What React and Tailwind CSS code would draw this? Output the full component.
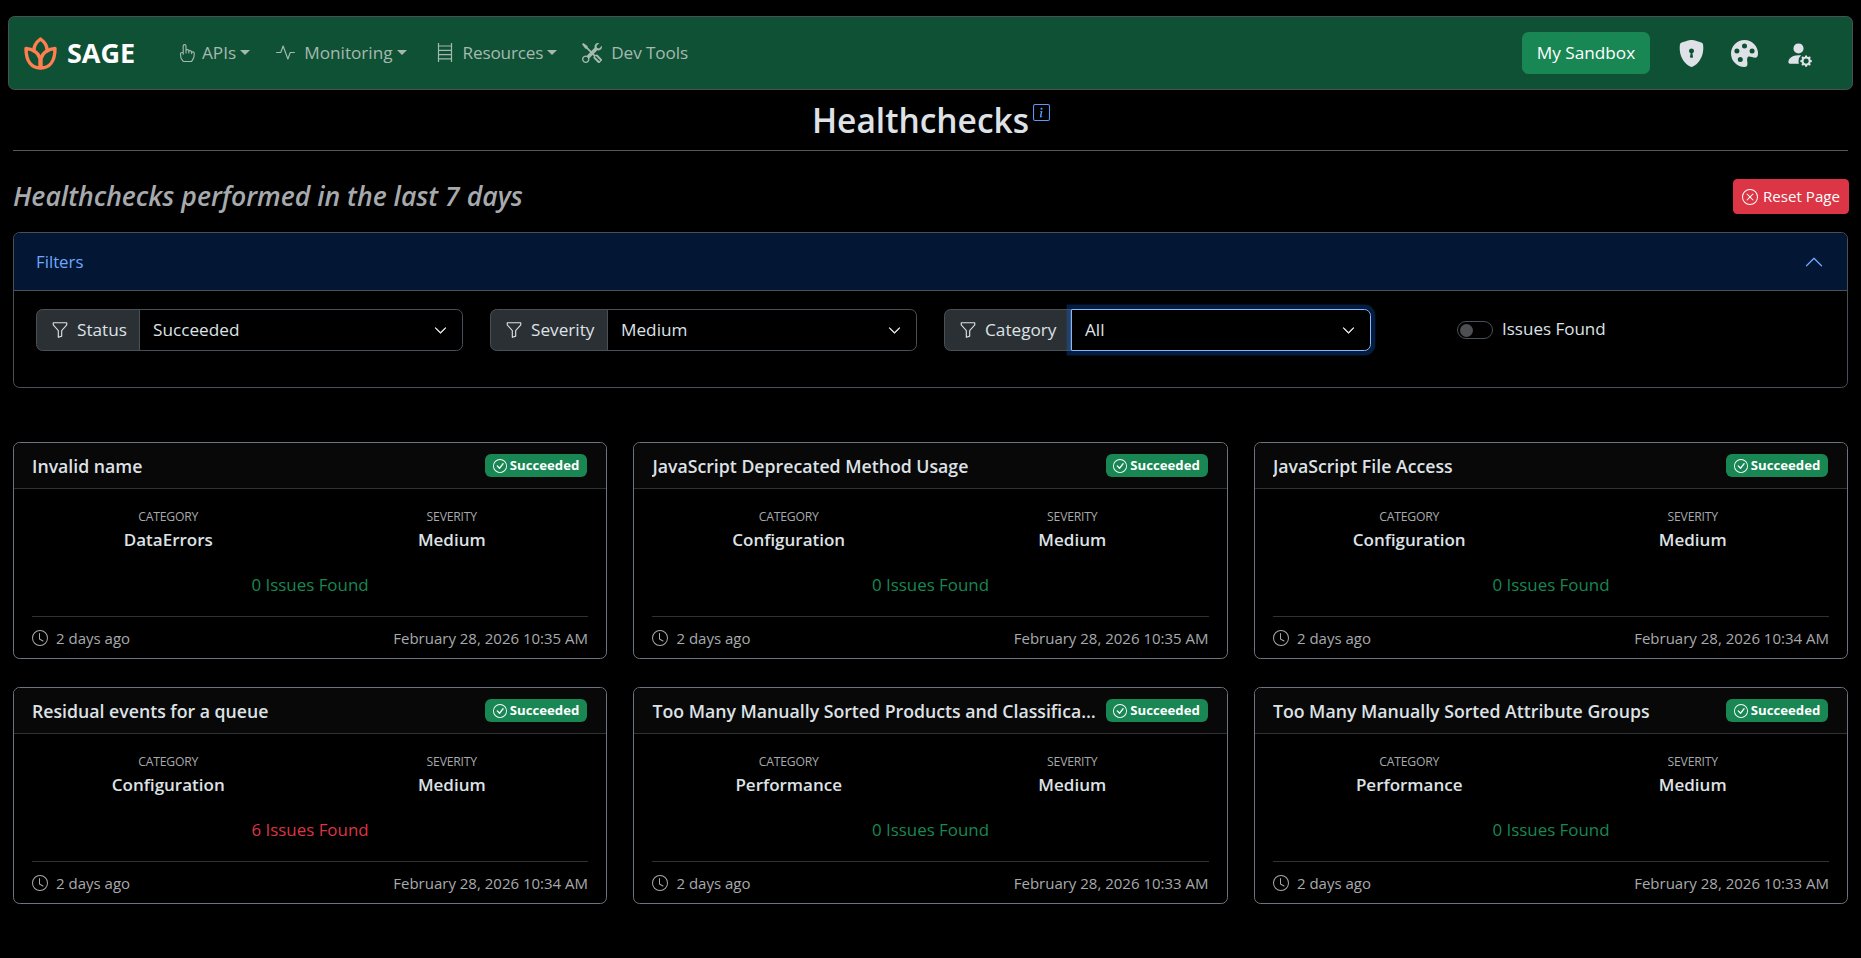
import React from "react";
import {
  BsHandIndex, BsActivity, BsTools, BsShieldLockFill, BsPaletteFill, BsPersonFillGear,
  BsFunnel, BsClock, BsCheckCircle, BsXCircle, BsInfoSquare, BsChevronDown, BsChevronUp,
} from "react-icons/bs";

const font = "font-['Open_Sans','Noto_Sans',sans-serif]";

const cards = [
  { t: "Invalid name", c: "DataErrors", n: 0, d: "February 28, 2026 10:35 AM" },
  { t: "JavaScript Deprecated Method Usage", c: "Configuration", n: 0, d: "February 28, 2026 10:35 AM" },
  { t: "JavaScript File Access", c: "Configuration", n: 0, d: "February 28, 2026 10:34 AM" },
  { t: "Residual events for a queue", c: "Configuration", n: 6, d: "February 28, 2026 10:34 AM" },
  { t: "Too Many Manually Sorted Products and Classifications", c: "Performance", n: 0, d: "February 28, 2026 10:33 AM" },
  { t: "Too Many Manually Sorted Attribute Groups", c: "Performance", n: 0, d: "February 28, 2026 10:33 AM" },
];

function Caret() {
  return <span className="ml-[4px] w-0 h-0 border-x-[5px] border-x-transparent border-t-[5px] border-t-[#a5b9b0]" />;
}

function NavItem({ icon, label, caret, iconClass, labelClass, className }) {
  return (
    <div className={`flex items-center text-[#a5b9b0] text-[17.2px] ${className}`}>
      <span className={`flex items-center justify-center ${iconClass}`}>{icon}</span>
      <span className={labelClass}>{label}</span>
      {caret && <Caret />}
    </div>
  );
}

function Logo() {
  return (
    <svg viewBox="0 0 33 33" className="w-[33px] h-[33px]" fill="none" stroke="#ff7f50" strokeWidth="3.4" strokeLinejoin="round" strokeLinecap="round">
      <path d="M10 14C9.600 9.500 12.500 5 16.500 2c4 3 6.900 7.500 6.500 12" />
      <path d="M2 11.500c6.500.3 12.500 4 14 10v9.500C8 31 2 25 2 11.500Z" />
      <path d="M31 11.500c-6.500.3-12.500 4-14 10v9.500c8 0 14-6 14-19.500Z" />
    </svg>
  );
}

function LadderIcon() {
  return (
    <svg viewBox="0 0 16 19" className="w-[16px] h-[19px]" fill="none" stroke="currentColor" strokeWidth="1.200">
      <path d="M1.500 0v19M14.500 0v19M1.500 3h13M1.500 7.300h13M1.500 11.600h13M1.500 15.900h13" />
    </svg>
  );
}

function FilterSelect({ label, value, labelW, focus, className }) {
  return (
    <div className={`flex w-[427px] h-[42px] ${className || ""}`}>
      <div style={{ width: labelW }} className="flex items-center pl-[14px] bg-[#2b3035] border border-[#495057] rounded-l-[6.6px] text-[#dee2e6] text-[17.2px] shrink-0">
        <BsFunnel className="w-[18px] h-[18px] mr-[8px] shrink-0" />
        <span>{label}</span>
      </div>
      <div className={`flex-1 flex items-center justify-between pl-[13px] pr-[15px] border rounded-r-[6.6px] text-[#dee2e6] text-[17.2px] ${focus ? "border-[#86b7fe] shadow-[0_0_0_4.4px_rgba(13,110,253,0.25)] z-10" : "border-[#495057] -ml-px"}`}>
        <span>{value}</span>
        <BsChevronDown className="w-[13px] h-[13px] stroke-[1px]" />
      </div>
    </div>
  );
}

function Card({ t, c, n, d }) {
  return (
    <div className="h-[217px] border border-[#6c757d] rounded-[6.6px] flex flex-col overflow-hidden">
      <div className="h-[46px] shrink-0 border-b border-[#2f3133] bg-[#080808] flex items-center justify-between pl-[18px] pr-[19px]">
        <div className="min-w-0 flex-1 truncate text-[17.7px] font-semibold text-[#dee2e6] pr-[7px] relative top-px">{t}</div>
        <div className="shrink-0 h-[23px] w-[102px] rounded-[6px] bg-[#198754] flex items-center justify-center text-white text-[13.2px] font-bold">
          <BsCheckCircle className="w-[14px] h-[14px] mr-[3px] shrink-0" />
          Succeeded
        </div>
      </div>
      <div className="flex-1 pl-[18px] pr-[18px] flex flex-col">
        <div className="-mx-[5.5px] grid grid-cols-2 pt-[19px] text-center">
          <div>
            <div className="text-[12.2px] leading-[18px] tracking-[-0.2px] text-[#a7aaad]">CATEGORY</div>
            <div className="text-[17px] leading-[26px] font-semibold text-[#dee2e6] relative top-px">{c}</div>
          </div>
          <div>
            <div className="text-[12.2px] leading-[18px] tracking-[-0.2px] text-[#a7aaad]">SEVERITY</div>
            <div className="text-[17px] leading-[26px] font-semibold text-[#dee2e6] relative top-px">Medium</div>
          </div>
        </div>
        <div className={`text-center text-[16.9px] leading-[26px] mt-[20px] ${n === 0 ? "text-[#198754]" : "text-[#dc3545]"}`}>
          {n} Issues Found
        </div>
        <div className="border-t border-[#2f3133] mt-[18px] pt-[10px] flex items-center justify-between text-[15px] text-[#a7aaad] leading-[22px]">
          <span className="flex items-center">
            <BsClock className="w-[16px] h-[16px] mr-[8px]" />
            2 days ago
          </span>
          <span>{d}</span>
        </div>
      </div>
    </div>
  );
}

export default function App() {
  return (
    <div className={`${font} bg-black min-h-[958px] overflow-hidden`}>
      <nav className="mx-2 mt-4 h-[74px] border border-[#495057] rounded-[6.6px] bg-[#0f5135] flex items-center">
        <div className="ml-[15px] w-[33px]"><Logo /></div>
        <span className="ml-[10px] text-white text-[27px] font-bold w-[68px]">SAGE</span>
        <NavItem className="ml-[42px]" iconClass="w-[25px] justify-start" icon={<BsHandIndex className="w-[18px] h-[18px]" />} label="APIs" caret />
        <NavItem className="ml-[26px]" iconClass="w-[28px] justify-start" icon={<BsActivity className="w-[19px] h-[19px]" />} label="Monitoring" caret />
        <NavItem className="ml-[30px]" iconClass="w-[26px] justify-start" labelClass="tracking-[-0.2px]" icon={<LadderIcon />} label="Resources" caret />
        <NavItem className="ml-[25px]" iconClass="w-[29px] justify-start" labelClass="tracking-[-0.1px]" icon={<BsTools className="w-[20px] h-[20px]" />} label="Dev Tools" />
        <div className="ml-auto flex items-center">
          <div className="w-[128px] h-[42px] rounded-[6.6px] bg-[#198754] text-white text-[17.2px] flex items-center justify-center">My Sandbox</div>
          <BsShieldLockFill className="ml-[28px] w-[27px] h-[27px] text-[#dee2e6]" />
          <BsPaletteFill className="ml-[26px] w-[27px] h-[27px] text-[#dee2e6]" />
          <BsPersonFillGear className="ml-[27px] w-[27px] h-[27px] mr-[40px] text-[#dee2e6]" />
        </div>
      </nav>

      <div className="mx-[13px]">
        <div className="h-[61px] border-b border-[#55595e] flex items-center justify-center">
          <h1 className="relative -left-[10px] top-px text-[33.5px] leading-none font-semibold text-[#dee2e6]">
            Healthchecks
            <BsInfoSquare className="absolute -right-[21px] top-[0px] w-[17px] h-[17px] text-[#5a9afc]" />
          </h1>
        </div>

        <div className="h-[81px] pt-[10px] flex items-center justify-between">
          <h2 className="text-[26.6px] italic font-semibold text-[#a7aaad]">Healthchecks performed in the last 7 days</h2>
          <div className="w-[116px] h-[35px] rounded-[4.4px] bg-[#dc3545] text-white text-[15.1px] flex items-center justify-center relative left-px">
            <BsXCircle className="w-[16px] h-[16px] mr-[5px]" />
            Reset Page
          </div>
        </div>

        <div className="h-[156px] border border-[#495057] rounded-[6.6px] overflow-hidden">
          <div className="h-[58px] bg-[#031633] border-b border-[#495057] flex items-center justify-between pl-[22px] pr-[23px]">
            <span className="text-[#6ea8fe] text-[16.8px]">Filters</span>
            <BsChevronUp className="w-[20px] h-[20px] text-[#6ea8fe]" />
          </div>
          <div className="flex items-center pl-[22px] pt-[18px]">
            <FilterSelect label="Status" value="Succeeded" labelW={104} />
            <FilterSelect className="ml-[27px]" label="Severity" value="Medium" labelW={118} />
            <FilterSelect className="ml-[27px]" label="Category" value="All" labelW={127} focus />
            <div className="ml-[86px] flex items-center">
              <div className="w-[36px] h-[18px] rounded-full border border-[#495057] flex items-center pl-[2px]">
                <div className="w-[13px] h-[13px] rounded-full bg-[#4d4f52]" />
              </div>
              <span className="ml-[9px] text-[#dee2e6] text-[17px] relative -top-[1px]">Issues Found</span>
            </div>
          </div>
        </div>

        <div className="mt-[54px] grid grid-cols-3 gap-x-[26.4px] gap-y-[28px]">
          {cards.map((c) => <Card key={c.t} {...c} />)}
        </div>
      </div>
    </div>
  );
}
